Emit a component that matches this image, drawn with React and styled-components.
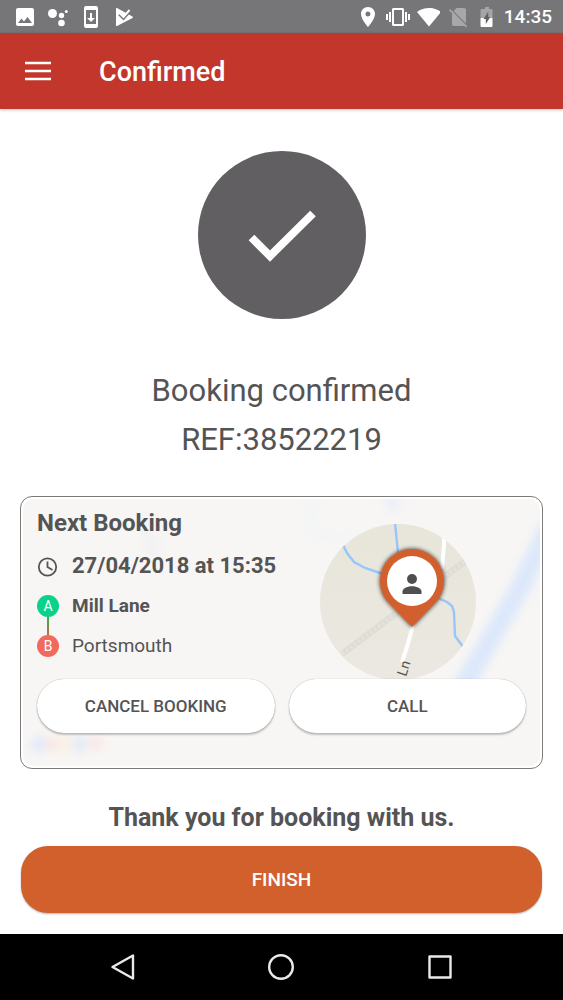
import React from 'react';
import styled, { createGlobalStyle } from 'styled-components';

const GlobalStyle = createGlobalStyle`
  *, *::before, *::after { box-sizing: border-box; }
  body {
    margin: 0;
    background: #fff;
    color: #555455;
    font-family: Roboto, "Liberation Sans", sans-serif;
  }
  button { font: inherit; color: inherit; border: 0; padding: 0; cursor: pointer; }
  h1, h2, p, ul { margin: 0; padding: 0; }
  svg { display: block; flex: none; }
`;

const Screen = styled.div`
  min-height: 100vh;
  display: flex;
  flex-direction: column;
`;

const StatusBar = styled.div`
  height: 33px;
  padding: 0 11px 0 13px;
  display: flex;
  justify-content: space-between;
  align-items: center;
  background: #767577;
  color: #fff;
`;

const IconGroup = styled.div`
  display: flex;
  align-items: center;
  gap: ${(p) => p.$gap}px;
`;

const Clock = styled.time`
  margin-left: 4px;
  font-size: 19px;
  line-height: 24px;
  font-weight: 500;
`;

const StatusRight = styled.div`
  display: flex;
  align-items: center;
`;

const AppBar = styled.header`
  height: 76px;
  padding: 0 24px;
  display: flex;
  align-items: center;
  gap: 47px;
  background: #c3362b;
  color: #fff;
  box-shadow: 0 1px 3px rgba(0, 0, 0, 0.25);
`;

const MenuButton = styled.button`
  background: none;
`;

const AppTitle = styled.h1`
  padding-top: 2px;
  font-size: 27px;
  line-height: 36px;
  font-weight: 500;
`;

const Content = styled.main`
  flex: 1;
  padding: 42px 20px 21px;
  display: flex;
  flex-direction: column;
`;

const CheckBadge = styled.div`
  align-self: center;
  width: 168px;
  height: 168px;
  border-radius: 50%;
  background: #625f62;
`;

const Confirmation = styled.div`
  margin: 47px 0 32px;
  text-align: center;
  font-size: 31px;
  line-height: 49px;
`;

const Card = styled.section`
  position: relative;
  padding: 11px 16px 35px;
  border: 1px solid #7b7b7b;
  border-radius: 12px;
`;

const CardBackdrop = styled.svg`
  position: absolute;
  inset: 2px;
  width: calc(100% - 4px);
  height: calc(100% - 4px);
  border-radius: 10px;
`;

const CardBody = styled.div`
  position: relative;
`;

const CardTop = styled.div`
  display: flex;
  justify-content: space-between;
  padding-right: 50px;
`;

const Details = styled.div`
  padding-bottom: 13px;
`;

const CardTitle = styled.h2`
  margin-bottom: 8px;
  font-size: 24px;
  line-height: 30px;
  font-weight: 700;
`;

const DetailRow = styled.div`
  display: flex;
  align-items: center;
  gap: 13px;
`;

const DateText = styled.time`
  font-size: 22px;
  line-height: 40px;
  font-weight: 700;
`;

const Track = styled.div`
  display: flex;
  flex-direction: column;
  align-items: center;
`;

const Marker = styled.span`
  width: 22px;
  height: 22px;
  border-radius: 50%;
  background: ${(p) => p.$color};
  color: #fff;
  font-size: 14px;
  line-height: 22px;
  text-align: center;
`;

const Connector = styled.span`
  width: 2px;
  height: 18px;
  background: linear-gradient(#35b050, #c46b3f);
`;

const Stops = styled.ul`
  list-style: none;
`;

const Stop = styled.li`
  font-size: 19px;
  line-height: 40px;
  font-weight: ${(p) => (p.$strong ? 700 : 400)};
`;

const MapThumb = styled.svg`
  align-self: flex-end;
`;

const Actions = styled.div`
  position: relative;
  display: flex;
  gap: 14px;
`;

const PillButton = styled.button`
  flex: 1;
  height: 54px;
  border-radius: 27px;
  background: #fff;
  font-size: 17px;
  font-weight: 500;
  box-shadow: 0 0 1px rgba(0, 0, 0, 0.4), 0 2px 2px rgba(0, 0, 0, 0.22);
`;

const Thanks = styled.p`
  margin: 34px 0 13px;
  text-align: center;
  font-size: 25px;
  line-height: 30px;
  font-weight: 700;
`;

const FinishButton = styled.button`
  height: 67px;
  margin: 0 1px;
  border-radius: 27px;
  background: #d2602d;
  color: #fff;
  font-size: 19px;
  font-weight: 500;
  box-shadow: 0 1px 2px rgba(0, 0, 0, 0.3);
`;

const NavBar = styled.nav`
  height: 66px;
  padding: 0 44px;
  display: flex;
  background: #000;
`;

const NavButton = styled.button`
  flex: 1;
  display: flex;
  align-items: center;
  justify-content: center;
  background: none;
`;

const Glyph = ({ children }) => (
  <svg width="24" height="24" viewBox="0 0 24 24" fill="currentColor" aria-hidden="true">
    {children}
  </svg>
);

const NavGlyph = ({ children }) => (
  <svg width="28" height="28" viewBox="0 0 28 28" fill="none" stroke="#ece9ec" strokeWidth="2.4" strokeLinejoin="round" aria-hidden="true">
    {children}
  </svg>
);

const StatusIcons = () => (
  <StatusBar>
    <IconGroup $gap={9}>
      <Glyph>
        <path d="M21 19V5c0-1.1-.9-2-2-2H5c-1.1 0-2 .9-2 2v14c0 1.100.9 2 2 2h14c1.100 0 2-.9 2-2zM8.500 13.500l2.500 3.010L14.500 12l4.500 6H5l3.500-4.500z" />
      </Glyph>
      <Glyph>
        <circle cx="6.500" cy="8.500" r="4.500" />
        <circle cx="15.500" cy="10.500" r="2.700" />
        <circle cx="15.500" cy="18" r="3.300" />
        <circle cx="20.300" cy="6.500" r="1.500" />
      </Glyph>
      <Glyph>
        <path fillRule="evenodd" d="M7 1h10a2 2 0 0 1 2 2v18a2 2 0 0 1-2 2H7a2 2 0 0 1-2-2V3a2 2 0 0 1 2-2zM7 5v14h10V5zM11 8h2v5h3l-4 4-4-4h3z" />
      </Glyph>
      <Glyph>
        <path d="M4 3.500Q4 2.500 5 3L20.500 11.500q1 .8 0 1.600L5 21q-1 .4-1-.6z" />
        <path d="M7 9.500L11.500 14L19 5.500" fill="none" stroke="#767577" strokeWidth="2" />
        <path d="M8 8.500L11.500 12L17.500 5" fill="none" stroke="currentColor" strokeWidth="2" />
      </Glyph>
    </IconGroup>
    <StatusRight>
      <IconGroup $gap={6}>
        <Glyph>
          <path d="M12 2C8.130 2 5 5.130 5 9c0 5.250 7 13 7 13s7-7.750 7-13c0-3.870-3.130-7-7-7zm0 9.500a2.500 2.500 0 1 1 0-5 2.500 2.500 0 0 1 0 5z" />
        </Glyph>
        <Glyph>
          <path d="M0 15h2V9H0v6zm3 2h2V7H3v10zm19-8v6h2V9h-2zm-3 8h2V7h-2v10zM16.500 3h-9C6.670 3 6 3.670 6 4.500v15c0 .830.670 1.500 1.500 1.500h9c.830 0 1.500-.670 1.500-1.500v-15c0-.830-.670-1.500-1.500-1.500zM16 19H8V5h8v14z" />
        </Glyph>
        <Glyph>
          <path d="M13 21.500L25 7C24.400 6.600 20 3 13 3S1.600 6.600 1 7z" />
        </Glyph>
        <Glyph>
          <g opacity=".36">
            <path d="M20 18.500V5c0-1.100-.9-2-2-2h-7.500L7.600 6z" />
            <path d="M4.200 4L3 5.200l3 3.100V19c0 1.100.9 2 2 2h10.500l1.500 1.500 1.200-1.200z" />
          </g>
        </Glyph>
        <Glyph>
          <path opacity=".35" d="M15.200 4H13V2H9v2H5.800C5.100 4 4.500 4.600 4.500 5.300V13h12V5.300c0-.7-.6-1.300-1.300-1.300z" />
          <path d="M4.500 13h12v7.700c0 .7-.6 1.300-1.300 1.300H5.800c-.7 0-1.300-.6-1.300-1.300z" />
          <path d="M12.300 6.500v5.500h2L9.800 19v-5H7.500z" fill="#626163" />
        </Glyph>
      </IconGroup>
      <Clock dateTime="14:35">14:35</Clock>
    </StatusRight>
  </StatusBar>
);

const Backdrop = () => (
  <CardBackdrop viewBox="0 0 519 269" preserveAspectRatio="xMidYMid slice" aria-hidden="true">
    <defs>
      <filter id="soft" x="-50%" y="-50%" width="200%" height="200%">
        <feGaussianBlur stdDeviation="5" />
      </filter>
    </defs>
    <rect width="519" height="269" fill="#f8f6f4" />
    <g filter="url(#soft)">
      <path d="M530 25L500 88L440 192" fill="none" stroke="#dce8fb" strokeWidth="20" />
      <path d="M368 -4l6 16" stroke="#e9eefa" strokeWidth="12" />
      <path d="M290 0v38h50" fill="none" stroke="#f3f5f6" strokeWidth="12" />
      <path d="M118 20l18 40" stroke="#f3f2f3" strokeWidth="16" />
      <circle cx="16" cy="247" r="9" fill="#e4eaf8" />
      <circle cx="30" cy="247" r="7" fill="#f9e6e1" />
      <circle cx="42" cy="247" r="7" fill="#faf2e0" />
      <circle cx="57" cy="247" r="8" fill="#e1e9f8" />
      <circle cx="74" cy="246" r="7" fill="#f9e6e3" />
    </g>
  </CardBackdrop>
);

const PickupMap = () => (
  <MapThumb width="156" height="156" viewBox="0 0 156 156" role="img" aria-label="Pickup location on Mill Lane">
    <defs>
      <clipPath id="disc"><circle cx="78" cy="79" r="78" /></clipPath>
      <linearGradient id="land" x1="0" y1="0" x2="0" y2="1">
        <stop offset="0" stopColor="#e8e6da" />
        <stop offset="1" stopColor="#ebe8e2" />
      </linearGradient>
      <filter id="pinShadow" x="-30%" y="-30%" width="160%" height="160%">
        <feDropShadow dx="0" dy="0" stdDeviation="2" floodColor="#222" floodOpacity="1" />
      </filter>
    </defs>
    <g clipPath="url(#disc)" fill="none">
      <rect width="156" height="157" fill="url(#land)" />
      <path d="M22 131L148 36" stroke="#dedbd3" strokeWidth="6" />
      <path d="M22 131L148 36" stroke="#e5e2da" strokeWidth="4" strokeDasharray="3 2" />
      <g stroke="#99c6f8" strokeWidth="2.400">
        <path d="M23 22l4 8 7 9 11 6 18 6" />
        <path d="M75 0l3 30" />
        <path d="M118 75l9 4 5 4 2 6 1 24 9 12" />
      </g>
      <g stroke="#fff" strokeWidth="4">
        <path d="M124 12v10l-2 24" />
        <path d="M93 102l-6 22-5 15" />
      </g>
    </g>
    <text transform="translate(86 154) rotate(-72)" fontSize="14" fill="#555">Ln</text>
    <g filter="url(#pinShadow)">
      <path d="M69 80.300A32 32 0 1 1 115 80.300L92 104z" fill="#d2602d" />
    </g>
    <circle cx="92" cy="58" r="25" fill="#fff" />
    <g fill="#504e50">
      <circle cx="92" cy="56" r="5" />
      <path d="M82.500 71v-2.500c0-3.500 6-5.200 9.500-5.200s9.500 1.700 9.500 5.200V71z" />
    </g>
  </MapThumb>
);

export default function App() {
  return (
    <>
      <GlobalStyle />
      <Screen>
        <StatusIcons />
        <AppBar>
          <MenuButton aria-label="Open menu">
            <svg width="28" height="20" viewBox="0 0 28 20" stroke="#fff" strokeWidth="2.600" aria-hidden="true">
              <path d="M1 2h26M1 10h26M1 18h26" />
            </svg>
          </MenuButton>
          <AppTitle>Confirmed</AppTitle>
        </AppBar>

        <Content>
          <CheckBadge>
            <svg width="168" height="168" viewBox="0 0 168 168" role="img" aria-label="Confirmed">
              <path d="M53.500 86.500L72 105L115 62.500" fill="none" stroke="#fff" strokeWidth="8" />
            </svg>
          </CheckBadge>

          <Confirmation>
            <p>Booking confirmed</p>
            <p>REF:38522219</p>
          </Confirmation>

          <Card aria-labelledby="next-booking">
            <Backdrop />
            <CardBody>
              <CardTop>
                <Details>
                  <CardTitle id="next-booking">Next Booking</CardTitle>
                  <DetailRow>
                    <svg width="22" height="22" viewBox="0 0 22 22" fill="none" stroke="#555455" strokeWidth="1.800" aria-hidden="true">
                      <circle cx="10.500" cy="12" r="8.700" />
                      <path d="M10.500 6.500V12l5 3" />
                    </svg>
                    <DateText dateTime="2018-04-27T15:35">27/04/2018 at 15:35</DateText>
                  </DetailRow>
                  <DetailRow>
                    <Track>
                      <Marker $color="#0bd28b">A</Marker>
                      <Connector />
                      <Marker $color="#f26a5e">B</Marker>
                    </Track>
                    <Stops>
                      <Stop $strong>Mill Lane</Stop>
                      <Stop>Portsmouth</Stop>
                    </Stops>
                  </DetailRow>
                </Details>
                <PickupMap />
              </CardTop>
              <Actions>
                <PillButton>CANCEL BOOKING</PillButton>
                <PillButton>CALL</PillButton>
              </Actions>
            </CardBody>
          </Card>

          <Thanks>Thank you for booking with us.</Thanks>
          <FinishButton>FINISH</FinishButton>
        </Content>

        <NavBar aria-label="System">
          <NavButton aria-label="Back">
            <NavGlyph><path d="M24 2.500v23L3.500 14z" /></NavGlyph>
          </NavButton>
          <NavButton aria-label="Home">
            <NavGlyph><circle cx="14" cy="14" r="11.800" /></NavGlyph>
          </NavButton>
          <NavButton aria-label="Recent apps">
            <NavGlyph><rect x="3.500" y="3.500" width="21" height="21" /></NavGlyph>
          </NavButton>
        </NavBar>
      </Screen>
    </>
  );
}
